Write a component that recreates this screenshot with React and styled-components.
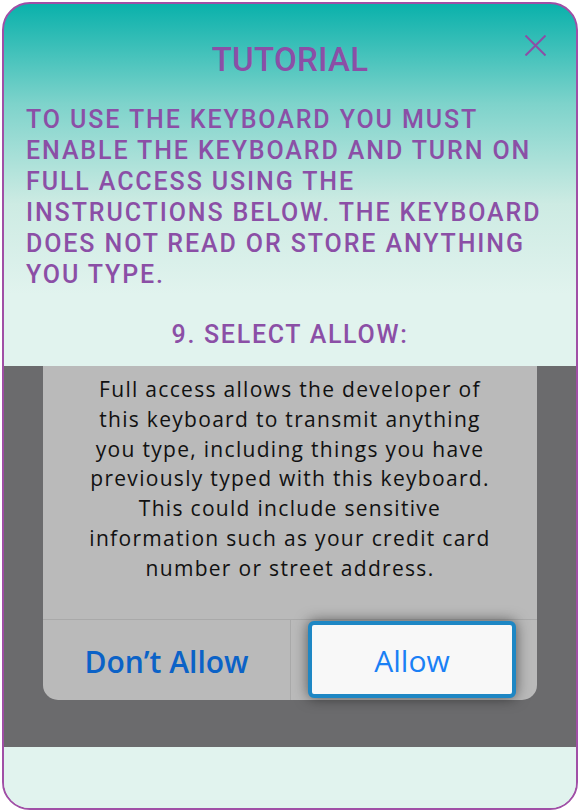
import React from "react";
import styled, { createGlobalStyle } from "styled-components";

const Global = createGlobalStyle`
  html, body { margin: 0; padding: 0; background: #ffffff; }
  body { font-family: Roboto, "Liberation Sans", sans-serif; }
`;

const Card = styled.div`
  margin: 2px;
  width: 576px;
  height: 808px;
  box-sizing: border-box;
  border: 2px solid #a04fa6;
  border-radius: 28px;
  overflow: hidden;
  display: flex;
  flex-direction: column;
  background: linear-gradient(180deg, #0ab1ab 0px, #7ed3cb 100px, #cdebe3 200px, #e1f3ee 290px, #e1f3ee 100%);
`;

const Header = styled.div`
  position: relative;
  padding: 36px 22px 0 22px;
`;

const Title = styled.h1`
  margin: 0;
  text-align: center;
  font-family: Roboto, sans-serif;
  font-weight: 500;
  font-size: 33px;
  line-height: 40px;
  letter-spacing: 0.3px;
  color: #8b4fa6;
`;

const Close = styled.button`
  position: absolute;
  top: 26px;
  right: 26px;
  width: 30px;
  height: 30px;
  padding: 0;
  border: 0;
  background: transparent;
  display: flex;
  align-items: center;
  justify-content: center;
`;

const Intro = styled.p`
  margin: 24px 0 0 0;
  font-family: Roboto, sans-serif;
  font-weight: 500;
  font-size: 25px;
  line-height: 31px;
  letter-spacing: 1.9px;
  white-space: nowrap;
  color: #8b4fa6;
`;

const Step = styled.h2`
  margin: 30px 0 0 0;
  text-align: center;
  font-family: Roboto, sans-serif;
  font-weight: 500;
  font-size: 25px;
  line-height: 30px;
  letter-spacing: 1.7px;
  color: #8b4fa6;
`;

const Shot = styled.div`
  margin-top: 16px;
  height: 381px;
  background: #6b6b6d;
  padding: 0 39px;
  box-sizing: border-box;
  display: flex;
  flex-direction: column;
`;

const Alert = styled.div`
  width: 494px;
  height: 334px;
  background: #bababa;
  border-radius: 0 0 15px 15px;
  display: flex;
  flex-direction: column;
`;

const Message = styled.p`
  margin: 0;
  padding: 9px 0 0 0;
  height: 254px;
  box-sizing: border-box;
  text-align: center;
  white-space: nowrap;
  font-family: "Open Sans", "Noto Sans", sans-serif;
  font-size: 21px;
  line-height: 29.8px;
  letter-spacing: 1.3px;
  color: #111111;
  border-bottom: 1px solid #a9a9a9;
`;

const Buttons = styled.div`
  flex: 1;
  display: grid;
  grid-template-columns: 247px 1fr;
`;

const Cell = styled.div`
  display: flex;
  align-items: stretch;
  border-left: ${(p) => (p.$divider ? "1px solid #a9a9a9" : "0")};
  padding: ${(p) => (p.$selected ? "1px 21px 2px 17px" : "0")};
`;

const Action = styled.div`
  flex: 1;
  display: flex;
  align-items: center;
  justify-content: center;
  box-sizing: border-box;
  font-family: "Open Sans", "Noto Sans", sans-serif;
  font-size: 30px;
  font-weight: ${(p) => (p.$bold ? 600 : 400)};
  color: ${(p) => (p.$bold ? "#0b62c7" : "#1a80f5")};
  padding-top: 2px;
  ${(p) =>
    p.$selected &&
    `
    background: #f8f8f8;
    border: 4px solid #1e87c4;
    border-radius: 6px;
    box-shadow: 0 0 14px rgba(0,0,0,0.55);
  `}
`;

const Footer = styled.div`
  flex: 1;
  background: #e1f3ee;
`;

export default function App() {
  return (
    <>
      <Global />
      <Card>
        <Header>
          <Title>TUTORIAL</Title>
          <Close aria-label="Close">
            <svg width="21" height="21" viewBox="0 0 21 21">
              <path d="M0.5 0.5 L20.5 20.5 M20.5 0.5 L0.5 20.5" stroke="#8b4fa6" strokeWidth="2" fill="none" />
            </svg>
          </Close>
          <Intro>
            TO USE THE KEYBOARD YOU MUST
            <br />
            ENABLE THE KEYBOARD AND TURN ON
            <br />
            FULL ACCESS USING THE
            <br />
            INSTRUCTIONS BELOW. THE KEYBOARD
            <br />
            DOES NOT READ OR STORE ANYTHING
            <br />
            YOU TYPE.
          </Intro>
          <Step>9. SELECT ALLOW:</Step>
        </Header>
        <Shot>
          <Alert>
            <Message>
              Full access allows the developer of
              <br />
              this keyboard to transmit anything
              <br />
              you type, including things you have
              <br />
              previously typed with this keyboard.
              <br />
              This could include sensitive
              <br />
              information such as your credit card
              <br />
              number or street address.
            </Message>
            <Buttons>
              <Cell>
                <Action $bold>Don’t Allow</Action>
              </Cell>
              <Cell $divider $selected>
                <Action $selected>Allow</Action>
              </Cell>
            </Buttons>
          </Alert>
        </Shot>
        <Footer />
      </Card>
    </>
  );
}
